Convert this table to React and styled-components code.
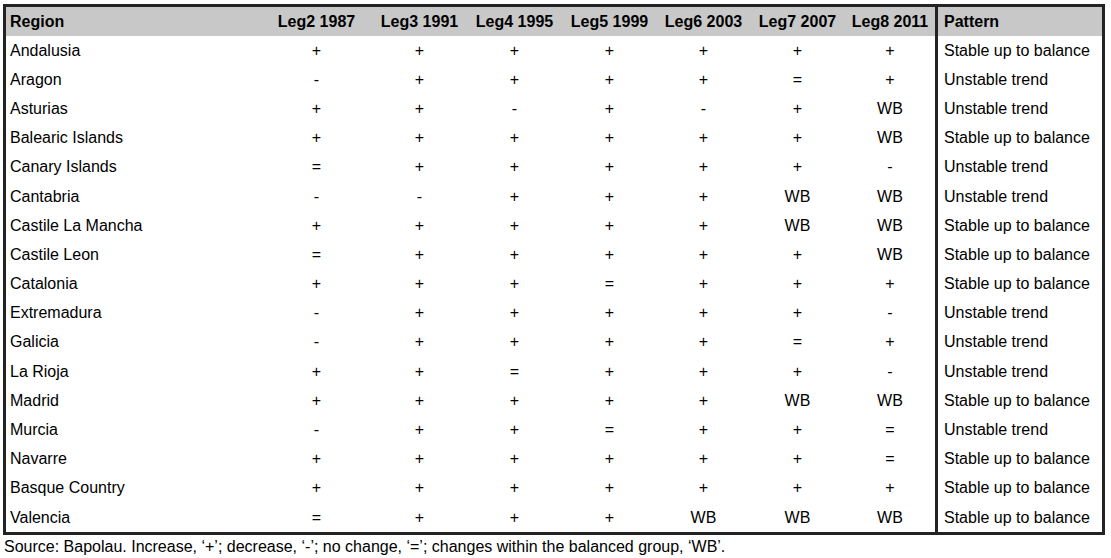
import React from 'react';
import styled, { createGlobalStyle } from 'styled-components';

const GlobalStyle = createGlobalStyle`
  html, body {
    margin: 0;
    padding: 0;
    background: #ffffff;
  }
  body {
    font-family: "Liberation Sans", Arial, sans-serif;
    color: #000;
  }
`

const Page = styled.div`
  padding: 4px 0 0 3px;
  width: 1108px;
`

const Frame = styled.div`
  width: 1102px;
  box-sizing: border-box;
  border: 3px solid #232323;
  display: grid;
  grid-template-columns: 255px 111px 95px 95px 95px 93px 95px 90px 1fr;
  grid-template-rows: 28.5px;
  grid-auto-rows: 29.2px;
  font-size: 16px;
`

const Row = styled.div`
  display: contents;
`

const Cell = styled.div`
  display: flex;
  align-items: center;
  justify-content: ${p => (p.$center ? 'center' : 'flex-start')};
  padding: 1px 0 0 ${p => (p.$center ? '0' : '4px')};
  background: ${p => (p.$head ? '#c8c8c8' : '#ffffff')};
  font-weight: ${p => (p.$head ? 'bold' : 'normal')};
  white-space: nowrap;
  line-height: 18px;
`

const PatternCell = styled(Cell)`
  border-left: 3px solid #232323;
  padding-left: 6px;
`

const Note = styled.p`
  margin: 3px 0 0 1px;
  font-size: 16px;
  line-height: 18px;
`

const legs = ['Leg2 1987', 'Leg3 1991', 'Leg4 1995', 'Leg5 1999', 'Leg6 2003', 'Leg7 2007', 'Leg8 2011']

const STABLE = 'Stable up to balance'
const UNSTABLE = 'Unstable trend'

const rows = [
  ['Andalusia', ['+', '+', '+', '+', '+', '+', '+'], STABLE],
  ['Aragon', ['-', '+', '+', '+', '+', '=', '+'], UNSTABLE],
  ['Asturias', ['+', '+', '-', '+', '-', '+', 'WB'], UNSTABLE],
  ['Balearic Islands', ['+', '+', '+', '+', '+', '+', 'WB'], STABLE],
  ['Canary Islands', ['=', '+', '+', '+', '+', '+', '-'], UNSTABLE],
  ['Cantabria', ['-', '-', '+', '+', '+', 'WB', 'WB'], UNSTABLE],
  ['Castile La Mancha', ['+', '+', '+', '+', '+', 'WB', 'WB'], STABLE],
  ['Castile Leon', ['=', '+', '+', '+', '+', '+', 'WB'], STABLE],
  ['Catalonia', ['+', '+', '+', '=', '+', '+', '+'], STABLE],
  ['Extremadura', ['-', '+', '+', '+', '+', '+', '-'], UNSTABLE],
  ['Galicia', ['-', '+', '+', '+', '+', '=', '+'], UNSTABLE],
  ['La Rioja', ['+', '+', '=', '+', '+', '+', '-'], UNSTABLE],
  ['Madrid', ['+', '+', '+', '+', '+', 'WB', 'WB'], STABLE],
  ['Murcia', ['-', '+', '+', '=', '+', '+', '='], UNSTABLE],
  ['Navarre', ['+', '+', '+', '+', '+', '+', '='], STABLE],
  ['Basque Country', ['+', '+', '+', '+', '+', '+', '+'], STABLE],
  ['Valencia', ['=', '+', '+', '+', 'WB', 'WB', 'WB'], STABLE],
]

const App = () => {
  return (
    <Page>
      <GlobalStyle />
      <Frame>
        <Row>
          <Cell $head>Region</Cell>
          {legs.map(l => <Cell $head $center key={l}>{l}</Cell>)}
          <PatternCell $head>Pattern</PatternCell>
        </Row>
        {rows.map(([region, values, pattern]) => (
          <Row key={region}>
            <Cell>{region}</Cell>
            {values.map((v, i) => <Cell $center key={i}>{v}</Cell>)}
            <PatternCell>{pattern}</PatternCell>
          </Row>
        ))}
      </Frame>
      <Note>Source: Bapolau. Increase, ‘+’; decrease, ‘-’; no change, ‘=’; changes within the balanced group, ‘WB’.</Note>
    </Page>
  );
};

export default App;
